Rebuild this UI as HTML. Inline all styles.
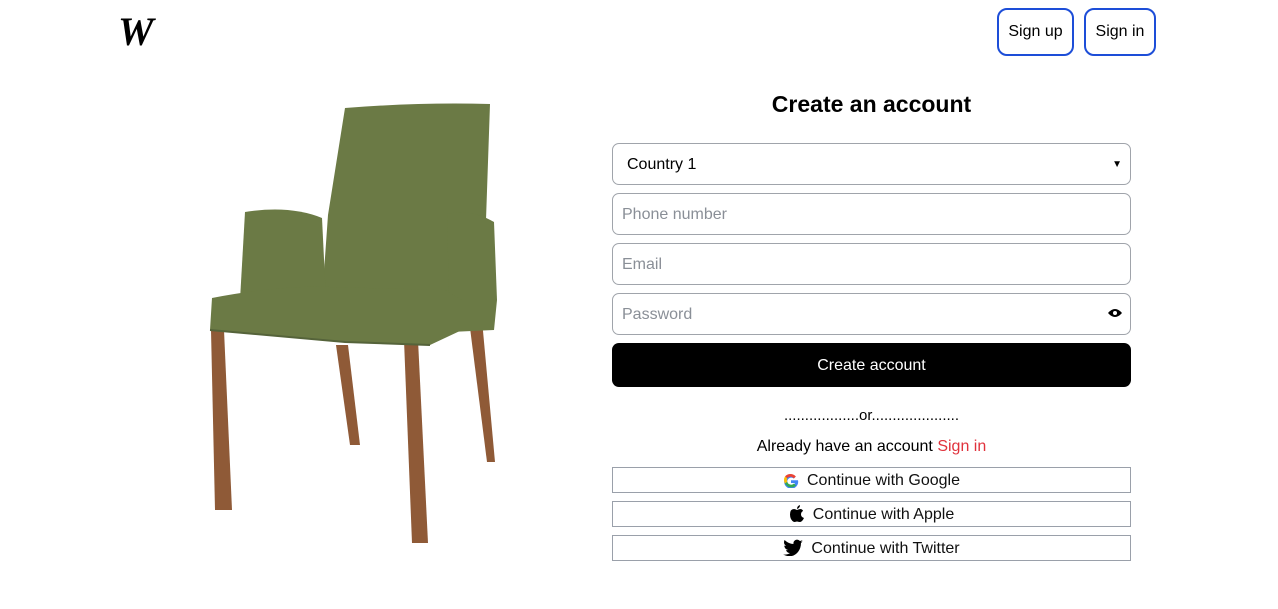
<!DOCTYPE html>
<html><head><style>
body{margin:0;width:1278px;height:609px;background:#fff;font-family:"Liberation Sans",sans-serif;position:relative;overflow:hidden}
.a{position:absolute}
.nb{position:absolute;top:8px;height:48px;border:2px solid #1d4ed8;border-radius:10px;box-sizing:border-box;font-size:16px;line-height:44px;text-align:center;color:#000}
.in{position:absolute;left:612px;width:519px;height:42px;border:1px solid #a0a4ab;border-radius:7px;box-sizing:border-box;font-size:16px;line-height:41px;padding-left:9px;color:#8a8f97}
.sb{position:absolute;left:612px;width:519px;height:26px;border:1px solid #9aa0aa;box-sizing:border-box;font-size:16px;line-height:25px;text-align:center;color:#111}
.sb svg{vertical-align:-3px;margin-right:8px}
</style></head><body>
<div class="a" style="left:118px;top:14px;font-family:'Liberation Serif',serif;font-style:italic;font-weight:bold;font-size:40px;line-height:36px;letter-spacing:-6px">W</div>
<div class="nb" style="left:997px;width:77px">Sign up</div>
<div class="nb" style="left:1084px;width:72px">Sign in</div>
<svg class="a" style="left:0;top:0" width="600" height="609">
<g fill="#8f5a37"><polygon points="211,330 224,330 232,510 215,510"/><polygon points="336,345 348,345 360,445 350,445"/><polygon points="404,340 418,340 428,543 412,543"/><polygon points="469,320 482,320 495,462 487,462"/></g>
<g fill="#6b7a45">
<path d="M345 108 Q420 102 490 104 L486 220 L485 300 L322 300 L328 215 Z"/>
<path d="M245 212 Q290 205 322 218 L326 300 L240 300 Z"/>
<path d="M447 214 Q470 208 494 222 L497 300 L494 330 L450 332 Z"/>
<path d="M212 298 Q280 285 330 287 L445 290 L462 300 L462 330 L430 345 L345 342 L210 330 Z"/>
</g>
<path d="M210 330 L345 342 L430 345" stroke="#55633a" stroke-width="2" fill="none"/>
</svg>
<div class="a" style="left:612px;width:519px;top:88px;text-align:center;font-size:23px;font-weight:bold;line-height:32px">Create an account</div>
<div class="in" style="top:143px;color:#000;padding-left:14px">Country 1<span style="position:absolute;right:8px;top:0;font-size:10px">&#9660;</span></div>
<div class="in" style="top:193px">Phone number</div>
<div class="in" style="top:243px">Email</div>
<div class="in" style="top:293px">Password<svg style="position:absolute;right:8px;top:14px" width="14" height="10" viewBox="0 0 14 10"><path d="M0 5Q7-3 14 5Q7 13 0 5Z" fill="#000"/><circle cx="7" cy="5" r="2" fill="#fff"/></svg></div>
<div class="a" style="left:612px;top:343px;width:519px;height:44px;background:#000;border-radius:7px;color:#fff;font-size:16px;line-height:45px;text-align:center">Create account</div>
<div class="a" style="left:612px;width:519px;top:407px;text-align:center;font-size:15px">..................or.....................</div>
<div class="a" style="left:612px;width:519px;top:438px;text-align:center;font-size:16px">Already have an account <span style="color:#e0323c">Sign in</span></div>
<div class="sb" style="top:467px"><svg width="16" height="16" viewBox="0 0 16 16"><path d="M15 8.2H8v2.8h4a4 4 0 1 1-1.2-4.5l2-2A7 7 0 1 0 15 8.2Z" fill="#4285f4"/><path d="M2 4.5A7 7 0 0 1 12.8 4.5l-2 2A4 4 0 0 0 4.3 6.3Z" fill="#ea4335"/><path d="M2 4.5L4.3 6.3A4 4 0 0 0 4.3 9.7L2 11.5A7 7 0 0 1 2 4.5Z" fill="#fbbc05"/><path d="M2 11.5L4.3 9.7A4 4 0 0 0 11 11.5l2 2A7 7 0 0 1 2 11.5Z" fill="#34a853"/></svg>Continue with Google</div>
<div class="sb" style="top:501px"><svg width="16" height="17" viewBox="0 0 16 17"><path d="M11 0Q11 3 8 4Q8 1 11 0ZM8 5Q10 4 12 4Q14 5 14 6Q12 7 12 9.5Q12 12 15 13Q13 17 11 17Q10 17 8 16.5Q6 17 5 17Q1 15 1 9.5Q1 4 5 4Q6 4 8 5Z" fill="#000"/></svg>Continue with Apple</div>
<div class="sb" style="top:535px"><svg width="20" height="17" viewBox="0 0 20 17"><path d="M20 2Q19 3 18 3Q19 2 19.5 1Q18.5 1.7 17 2Q15 0 12.5 1Q10 2.5 10.5 5Q6 5 1.5 1Q0 4.5 3 7Q2 7 1.2 6.5Q1.5 10 5 11Q4 11.3 3 11Q4 14 7 14Q4 16 0 15.5Q9 20 15 13Q18 9 18 4Q19 3 20 2Z" fill="#000"/></svg>Continue with Twitter</div>
</body></html>
